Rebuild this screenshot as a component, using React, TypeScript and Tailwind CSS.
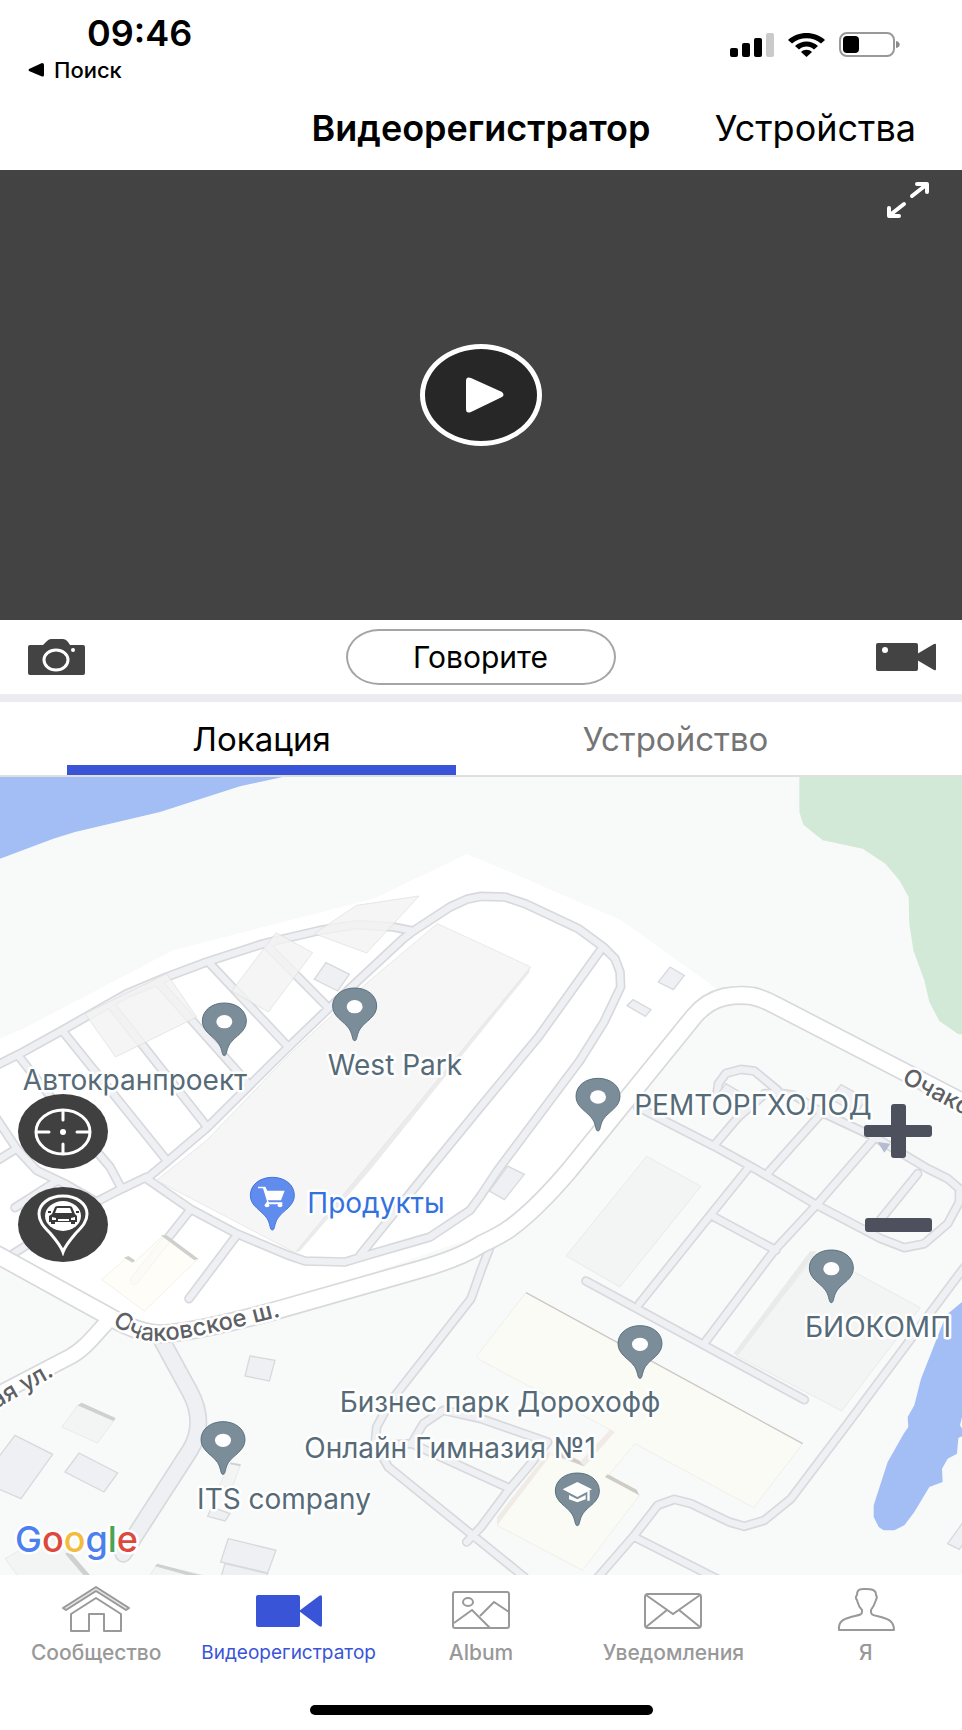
import React, { useState } from 'react';

type Point = { x: number; y: number };
type MapTab = 'location' | 'device';

const LABEL = '#566b78';

/* Terrain is drawn on a 2886 x 2394 grid, labels on a 962 x 798 one */
const districtRoads = [
  'M-20 890 60 850 190 778 380 670 500 620 620 575 790 520 960 480 1070 463 1180 470 1240 482',
  'M440 1220 350 1263 270 1305 40 1450',
  'M440 1225 500 1175 620 1073 860 835 985 715 1070 635 1210 505 1240 482 1350 410 1400 387 1443 378 1515 380 1575 400 1735 475 1810 530 1845 565 1860 605 1862 650 1812 755 1740 870 1493 1200 1443 1275 1410 1320 1290 1400 1100 1455 1035 1475 915 1472 865 1455 710 1390 570 1315Z',
  'M1805 535 1615 800 1443 1008 1290 1195 1080 1455',
  'M58 860 160 990 330 1190 362 1250',
  'M190 785 500 1170',
  'M330 700 620 1068',
  'M478 640 745 940',
  'M630 580 865 830',
  'M800 525 985 712',
  'M-20 1030 50 1135 -20 1178M50 1135 110 1200 200 1243 290 1295M170 1232 45 1312',
  'M570 1320 403 1530',
  'M710 1395 567 1585',
];

const eastRoads = [
  'M1913 1010 2143 1128 2273 1200 2443 1300 2643 1405 2713 1432 2773 1420 2843 1360 2878 1295 2878 1255 2843 1225 2783 1195 2623 1100 2463 1025 2383 975 2333 967 2293 970',
  'M2150 975 2155 940 2178 909 2223 897 2263 902 2333 960',
  'M2293 972 2215 1040 2145 1122',
  'M2463 1030 2300 1212',
  'M2618 1110 2453 1300 2323 1440 2118 1712',
  'M2243 1195 2133 1332 1918 1600',
  'M2133 1335 2328 1440',
  'M1758 1532 2413 1888',
  'M2753 1210 2640 1350',
  'M2920 1460 2886 1500 2543 1960 2373 2185 2293 2250 2233 2268 2188 2255 2073 2200 2023 2187 1973 2205 1903 2295 1760 2460',
  'M1903 2300 2170 2435',
  'M1478 1410 1443 1500 1413 1585 1170 1895 1130 1970 1125 2020 1165 2090 1443 2315 1573 2420',
  'M1235 2020 1270 1960 1330 1920 1443 1945 1643 2015 1593 2080 1525 2160 1443 2270 1400 2315',
  'M1140 2025 1235 2020 1443 2115 1520 2150',
];

const sheds = [
  '978,577 1048,612 1013,662 943,627',
  '2010,590 2053,615 2020,658 1975,635',
  '1899,688 1953,718 1936,738 1881,706',
  '1523,1187 1573,1212 1513,1288 1468,1262',
  '45,1995 158,2052 63,2185 -30,2145 -10,2068',
  '237,2048 353,2108 312,2165 195,2105',
  '750,1757 825,1770 808,1832 735,1817',
  '685,2305 828,2340 803,2408 662,2375',
  '675,2380 803,2410 790,2440 660,2430',
  '635,2210 690,2230 675,2252 623,2238',
  '2886,2260 2843,2320 2878,2337 2910,2290',
  '2178,940 2220,965 2200,995 2150,975',
  '2523,943 2600,985 2570,1030 2490,985',
];

const blocks = [
  '1940,1158 2103,1248 1860,1550 1698,1457',
  '2450,1450 2553,1500 2761,1612 2525,1922 2208,1755',
  '233,1905 345,1947 292,2018 185,1970',
  '690,2080 722,2083 697,2150 657,2148',
  '145,2290 15,2365 70,2440 290,2440',
  '470,2383 610,2415 440,2430',
];

const pins: Point[] = [
  { x: 673, y: 857 },
  { x: 1064, y: 812 },
  { x: 1794, y: 1083 },
  { x: 669, y: 2113 },
  { x: 2494, y: 1598 },
  { x: 1920, y: 1825 },
];

const placeLabels = [
  { text: 'Автокранпроект', x: 135, y: 313 },
  { text: 'West Park', x: 395, y: 298 },
  { text: 'РЕМТОРГХОЛОД', x: 753, y: 338 },
  { text: 'Бизнес парк Дорохофф', x: 500, y: 635 },
  { text: 'Онлайн Гимназия №1', x: 450, y: 681 },
  { text: 'ITS company', x: 284, y: 732 },
];

const googleLetters = [
  { char: 'G', color: '#4c80ee' },
  { char: 'o', color: '#db4a3c' },
  { char: 'o', color: '#f3bc3a' },
  { char: 'g', color: '#4c80ee' },
  { char: 'l', color: '#4aa354' },
  { char: 'e', color: '#db4a3c' },
];

function Roads({ paths }: { paths: string[] }) {
  const d = paths.join('');
  return (
    <g fill="none" strokeLinecap="round" strokeLinejoin="round">
      <path d={d} stroke="#d8d9dd" strokeWidth="29" />
      <path d={d} stroke="#eff0f3" strokeWidth="19" />
    </g>
  );
}

function Pin({ x, y, fill = '#7b8d99', stroke = '#5b7280', children }: Point & {
  fill?: string;
  stroke?: string;
  children?: React.ReactNode;
}) {
  return (
    <g transform={`translate(${x} ${y})`}>
      <path
        d="M0-1C-8-1-5-18-16-36C-32-60-66-72-66-105C-66-137-37-159 0-159S66-137 66-105C66-72 32-60 16-36C5-18 8-1 0-1Z"
        fill={fill}
        stroke={stroke}
        strokeWidth="3"
      />
      {children ?? <ellipse cx="0" cy="-103" rx="24" ry="20" fill="#fff" />}
    </g>
  );
}

function Terrain() {
  const highway =
    'M-40 1436 0 1458 330 1640C400 1680 450 1694 500 1690C600 1680 720 1650 840 1617L1250 1500C1340 1475 1400 1450 1443 1422C1480 1405 1510 1390 1533 1372C1590 1330 1640 1280 1708 1200L2083 737C2110 705 2140 688 2173 680Q2215 672 2256 677Q2290 685 2323 703L2743 920 2920 1012';
  const street = 'M330 1645C280 1700 250 1740 205 1762L-40 1890';
  const yard = 'M480 1700 570 1865C605 1930 600 1990 570 2040L370 2350';

  return (
    <svg x="0" y="0" width="962" height="798" viewBox="0 20 2886 2394">
      <rect x="0" y="20" width="2886" height="2394" fill="#f8faf9" />
      <path d="M0 20H848L720 48 480 125 225 185 160 205 0 265Z" fill="#a3bef5" />
      <path
        d="M2398 20V125L2410 163 2468 210 2588 235 2656 280 2698 330 2726 380 2728 460 2740 540 2773 630 2788 695 2818 752 2875 792H2886V20Z"
        fill="#d3e9d7"
      />
      <path
        d="M0 805 70 775 520 540 1120 385 1400 252 1443 268 1863 450 2003 550 2150 655 2043 740 1673 1200 1583 1300 1443 1395 840 1600 500 1680 350 1640 0 1440Z"
        fill="#fff"
      />
      <path
        d="M2886 1595 2838 1635 2763 1825 2743 1905 2723 1940 2725 1970 2711 1990 2663 2075 2621 2205V2240L2636 2270 2651 2280H2683L2713 2265 2743 2225 2788 2150 2828 2135 2826 2095 2843 2065 2871 2050 2875 2003 2886 1998V1975L2880 1965 2886 1940Z"
        fill="#a3bef5"
      />

      <g fill="none" strokeLinejoin="round">
        <path d={yard} stroke="#d8d9dd" strokeWidth="54" strokeLinecap="round" />
        <path d={yard} stroke="#eff0f3" strokeWidth="44" strokeLinecap="round" />
      </g>
      <Roads paths={eastRoads} />
      <Roads paths={districtRoads} />
      <g fill="none" strokeLinejoin="round">
        <path d={street} stroke="#d8d9dd" strokeWidth="52" />
        <path d={highway} stroke="#d8d9dd" strokeWidth="58" />
        <path d={street} stroke="#fff" strokeWidth="42" />
        <path d={highway} stroke="#fff" strokeWidth="48" />
      </g>

      <g fill="#eff0f3" stroke="#d8d9dd" strokeWidth="4">
        {sheds.map((points) => (
          <polygon key={points} points={points} />
        ))}
      </g>
      <g fill="#f3f4f4" stroke="#e3e4e4" strokeWidth="2">
        {blocks.map((points) => (
          <polygon key={points} points={points} />
        ))}
      </g>
      <g fill="#cfd0d0">
        <path d="M233 1905 245 1897 347 1943 340 1952Z" />
        <path d="M195 2350 210 2344 270 2414H250Z" />
        <path d="M138 2290 150 2284 158 2292 148 2298Z" />
        <path d="M465 2388 472 2380 600 2414H560Z" />
        <path d="M690 2076 722 2082 720 2088 692 2082Z" />
      </g>
      <path d="M2430 1443H2450L2215 1755 2200 1750Z" fill="#e9eaea" />

      {/* Warehouses of the northern block */}
      <polygon
        points="1312,460 1443,520 1592,590 1587,608 1443,785 1110,1200 900,1442 885,1447 470,1230 620,1110 860,860 1110,630"
        fill="#ebebeb"
      />
      <polygon
        points="1312,460 1443,520 1592,590 1443,770 1090,1200 885,1447 470,1230 620,1110 860,860 1110,630"
        fill="#f6f6f6"
        stroke="#e3e3e3"
        strokeWidth="2"
      />
      <g fill="#f2f2f2" fillOpacity="0.8" stroke="#dcdcdc" strokeWidth="2">
        <polygon points="1070,405 1257,377 1100,548 943,490" />
        <polygon points="828,487 938,547 805,725 695,662" />
        <polygon points="500,610 590,740 347,860 255,730" />
      </g>

      {/* Shops and the business park */}
      <polygon
        points="490,1395 593,1467 433,1622 305,1528 380,1462 405,1475"
        fill="#fefdf7"
        fillOpacity="0.85"
        stroke="#efeadf"
        strokeWidth="2"
      />
      <path d="M482 1395H500L595 1465 583 1470ZM372 1462 385 1457 405 1470 398 1477Z" fill="#cfcfcb" />
      <polygon
        points="1578,1567 2408,2020 2261,2212 1905,2020 1828,2112 1918,2175 1748,2400 1491,2265 1648,2050 1753,2088 1843,1985 1443,1770 1430,1757 1443,1740"
        fill="#fbfbf5"
        stroke="#ece9e2"
        strokeWidth="2"
      />
      <path d="M1578 1567 2408 2020" stroke="#cdc8c4" strokeWidth="4" />
      <path d="M1815 2120 1823 2112 1910 2158 1918 2175Z" fill="#cfcbc5" />
      <path d="M1690 2045 1745 2075 1753 2088 1665 2055Z" fill="#d3cdc8" />
      <path d="M1843 1985 1753 2088 1740 2075 1830 1978ZM1648 2040V2060L1491 2265V2240Z" fill="#f1ebe6" />

      <path d="M2633 1115 2671 1120 2653 1147Z" fill="#b5bbd0" />

      {pins.map((pin) => (
        <Pin key={`${pin.x}-${pin.y}`} x={pin.x} y={pin.y} />
      ))}
      <Pin x={817} y={1380} fill="#608ced" stroke="#4374dc">
        <g fill="#fff" transform="translate(-817 -1380)">
          <path d="M774 1249H796L802 1261H854L843 1290H803L807 1296H847V1302H797L801 1293 789 1254H774Z" />
          <ellipse cx="801" cy="1305" rx="7" ry="6" />
          <ellipse cx="840" cy="1305" rx="7" ry="6" />
        </g>
      </Pin>
      <Pin x={1732} y={2267}>
        <g fill="#fff">
          <path d="M-44-110 0-132 44-110 0-87Z" />
          <path d="M-25-93 0-80 25-93V-80L0-71-25-80ZM30-106H37V-76H30Z" />
        </g>
      </Pin>
    </svg>
  );
}

function CityMap() {
  return (
    <svg viewBox="0 0 962 798" className="block w-full h-auto" role="img" aria-label="Карта">
      <defs>
        <path id="road-south" d="M112 546C124 556 138 565 160 564C200 561 250 547 310 532" />
        <path id="road-east" d="M901 305L1010 362" />
        <path id="road-west" d="M-4 632L80 584" />
      </defs>
      <Terrain />
      <g stroke="#fff" strokeWidth="5" strokeLinejoin="round" paintOrder="stroke">
        <g className="text-[28px]" fill={LABEL} textAnchor="middle">
          {placeLabels.map((label) => (
            <text key={label.text} x={label.x} y={label.y}>
              {label.text}
            </text>
          ))}
          <text x="376" y="436" fill="#3471e0">
            Продукты
          </text>
          <text x="805" y="560" textAnchor="start">
            БИОКОМП
          </text>
        </g>
        <g className="text-[24px] font-medium" fill="#5d6064">
          <text>
            <textPath href="#road-south">Очаковское ш.</textPath>
          </text>
          <text>
            <textPath href="#road-east">Очако</textPath>
          </text>
          <text>
            <textPath href="#road-west">ая ул.</textPath>
          </text>
        </g>
        <text x="15" y="775" className="text-[36px] font-medium">
          {googleLetters.map((letter, n) => (
            <tspan key={n} fill={letter.color}>
              {letter.char}
            </tspan>
          ))}
        </text>
      </g>
    </svg>
  );
}

function StatusIcons() {
  return (
    <div className="flex items-center gap-[14px]">
      <svg width="44" height="24" viewBox="0 0 44 24">
        <rect x="0" y="15" width="8" height="9" rx="2" />
        <rect x="12" y="10" width="8" height="14" rx="2" />
        <rect x="24" y="5" width="8" height="19" rx="2" />
        <rect x="36" y="0" width="8" height="24" rx="2" fill="#cacaca" />
      </svg>
      <svg width="37" height="24" viewBox="0 0 37 24">
        <path d="M0 7C10-2.300 27-2.300 37 7L33 10.500C25 3.500 12 3.500 4 10.500Z" />
        <path d="M7 13C13.500 7 23.500 7 30 13L26 16.500C22 12.500 15 12.500 11 16.500Z" />
        <path d="M13 19C16 16 21 16 24 19L18.500 24Z" />
      </svg>
      <svg width="62" height="26" viewBox="0 0 62 26">
        <rect x="1" y="1" width="54" height="23" rx="7" fill="none" stroke="#999" strokeWidth="2" />
        <rect x="4" y="4" width="16" height="17" rx="4" />
        <path d="M57 9C62 10 62 15 57 16Z" fill="#8a8a8a" />
      </svg>
    </div>
  );
}

function HouseIcon() {
  return (
    <svg width="68" height="48" viewBox="0 0 68 48" fill="none" stroke="#999" strokeWidth="2" strokeLinejoin="round">
      <path d="M34 2 1 23 4 25 34 6 64 25 67 23Z" fill="#e3e3e3" />
      <path d="M34 13 9 29V46H27V29H42V46H59V29Z" />
    </svg>
  );
}

function RecorderIcon() {
  return (
    <svg width="66" height="48" viewBox="0 0 66 48" fill="#3a54d8">
      <rect x="0" y="10" width="44" height="32" rx="2" />
      <path d="M43 26 63 11Q66 9 66 12V40Q66 43 63 41Z" />
    </svg>
  );
}

function AlbumIcon() {
  return (
    <svg width="58" height="48" viewBox="0 0 58 48" fill="none" stroke="#999" strokeWidth="2">
      <rect x="1" y="7" width="56" height="36" rx="2" />
      <ellipse cx="16" cy="17" rx="5" ry="4" />
      <path d="M2 38 20 25 38 43M28 31 42 17 57 27" />
    </svg>
  );
}

function MailIcon() {
  return (
    <svg width="58" height="48" viewBox="0 0 58 48" fill="none" stroke="#999" strokeWidth="2">
      <rect x="1" y="9" width="56" height="34" rx="3" />
      <path d="M2 10 29 29 56 10M2 42 23 25M56 42 35 25" />
    </svg>
  );
}

function PersonIcon() {
  return (
    <svg width="58" height="48" viewBox="0 0 58 48" fill="none" stroke="#999" strokeWidth="2" strokeLinejoin="round">
      <path d="M2 45C1 36 7 34 14 32C22 30 25 30 25 27V25C21 21 21 18 20 15C18 13 19 11 20 10C20 3 25 4 29 4S39 4 39 10C40 11 40 13 39 15C38 18 37 21 34 25V27C34 30 36 30 44 32C51 34 57 36 57 45Z" />
    </svg>
  );
}

const navItems = [
  { label: 'Сообщество', icon: <HouseIcon />, active: false },
  { label: 'Видеорегистратор', icon: <RecorderIcon />, active: true },
  { label: 'Album', icon: <AlbumIcon />, active: false },
  { label: 'Уведомления', icon: <MailIcon />, active: false },
  { label: 'Я', icon: <PersonIcon />, active: false },
];

export default function App() {
  const [tab, setTab] = useState<MapTab>('location');

  const tabs: { id: MapTab; label: string }[] = [
    { id: 'location', label: 'Локация' },
    { id: 'device', label: 'Устройство' },
  ];

  return (
    <div className="min-h-screen flex flex-col bg-white text-black font-['Inter','Liberation_Sans',sans-serif]">
      {/* Status bar */}
      <div className="flex justify-between pt-3 pr-[61px]">
        <div>
          <div className="pl-[87px] text-[36px] leading-[42px] font-semibold">09:46</div>
          <a href="#search" className="flex items-center gap-[10px] pl-7 text-[22px] leading-[32px] font-medium">
            <svg width="16" height="14" viewBox="0 0 16 14">
              <path d="M1 6 14 0Q16 0 16 2V12Q16 14 14 13.500L1 8Q0 7 1 6Z" />
            </svg>
            Поиск
          </a>
        </div>
        <div className="pt-5">
          <StatusIcons />
        </div>
      </div>

      <header className="grid grid-cols-[1fr_auto_1fr] items-center h-[84px]">
        <h1 className="col-start-2 text-[36px] leading-[42px] font-semibold">Видеорегистратор</h1>
        <a href="#devices" className="justify-self-end pr-[46px] text-[36px] leading-[42px]">
          Устройства
        </a>
      </header>

      {/* Video */}
      <section className="relative aspect-[962/450] bg-[#434343] flex items-center justify-center">
        <button
          type="button"
          aria-label="Воспроизвести"
          className="w-[122px] h-[102px] rounded-[50%] border-[5px] border-white bg-[#272727] flex items-center justify-center"
        >
          <svg width="38" height="36" viewBox="0 0 38 36" fill="#fff" className="ml-2">
            <path d="M0 4Q0-1 5 1L36 15Q39 18 36 20L5 35Q0 37 0 32Z" />
          </svg>
        </button>
        <button type="button" aria-label="На весь экран" className="absolute top-3 right-[33px]">
          <svg
            width="42"
            height="36"
            viewBox="0 0 42 36"
            fill="none"
            stroke="#fff"
            strokeWidth="4"
            strokeLinecap="round"
            strokeLinejoin="round"
          >
            <path d="M25 14 39 3M30 2H40V10M17 22 3 33M2 26V34H12" />
          </svg>
        </button>
      </section>

      {/* Camera controls */}
      <div className="flex items-center justify-between h-[82px] pl-7 pr-[26px] border-b-8 border-[#ebebf0]">
        <button type="button" aria-label="Сделать фото">
          <svg width="57" height="36" viewBox="0 0 57 36">
            <path
              d="M2 6H15L19 2Q21 0 23 0H35Q38 0 40 3L42 6H55Q57 6 57 8V34Q57 36 55 36H2Q0 36 0 34V8Q0 6 2 6Z"
              fill="#434343"
            />
            <ellipse cx="28" cy="21" rx="12" ry="10" fill="none" stroke="#fff" strokeWidth="3" />
            <ellipse cx="45" cy="11" rx="2" ry="2" fill="#fff" />
          </svg>
        </button>
        <button
          type="button"
          className="w-[270px] h-14 rounded-[33px/28px] border-2 border-[#a5a5a5] text-[30px] leading-[36px]"
        >
          Говорите
        </button>
        <button type="button" aria-label="Записать видео">
          <svg width="60" height="28" viewBox="0 0 60 28">
            <rect x="0" y="0" width="42" height="28" rx="2" fill="#434343" />
            <path d="M41 11 58 1Q60 0 60 2V26Q60 28 58 27L41 17Z" fill="#434343" />
            <ellipse cx="9" cy="7" rx="3" ry="3" fill="#fff" />
          </svg>
        </button>
      </div>

      {/* Tabs */}
      <div role="tablist" className="grid grid-cols-2 gap-[25px] h-[75px] pl-[67px] pr-[92px] border-b-2 border-[#dfdfdf]">
        {tabs.map((t) => (
          <button
            key={t.id}
            type="button"
            role="tab"
            aria-selected={tab === t.id}
            onClick={() => setTab(t.id)}
            className={`pt-[10px] text-[33px] leading-[40px] border-b-[10px] ${
              tab === t.id ? 'border-[#3a54d8] text-black' : 'border-transparent text-[#757575]'
            }`}
          >
            {t.label}
          </button>
        ))}
      </div>

      {/* Map */}
      <main className="relative">
        <CityMap />
        <div className="absolute left-[18px] top-[317px] flex flex-col gap-[18px]">
          <button
            type="button"
            aria-label="Моё местоположение"
            className="w-[90px] h-[75px] rounded-[50%] bg-[#3a3a3a]/97 flex items-center justify-center"
          >
            <svg width="58" height="48" viewBox="0 0 58 48" fill="none" stroke="#fff" strokeWidth="3" strokeLinecap="round">
              <ellipse cx="29" cy="24" rx="27" ry="22" />
              <path d="M29 3V12M29 36V45M3 24H15M43 24H55" />
              <ellipse cx="29" cy="24" rx="3" ry="3" fill="#fff" stroke="none" />
            </svg>
          </button>
          <button
            type="button"
            aria-label="Местоположение автомобиля"
            className="w-[90px] h-[75px] rounded-[50%] bg-[#3a3a3a]/97 flex items-center justify-center"
          >
            <svg width="54" height="62" viewBox="0 0 54 62">
              <path
                d="M27 58C25 52 20 46 14 39C7 32 3 27 3 20C3 10 13 2 27 2S51 10 51 20C51 27 47 32 40 39C34 46 29 52 27 58Z"
                fill="none"
                stroke="#fff"
                strokeWidth="3"
              />
              <ellipse cx="27" cy="22" rx="18" ry="15" fill="#fff" />
              <g fill="#3a3a3a" transform="translate(1 0)">
                <path
                  d="M15 20 18 13Q19 12 21 12H32Q34 12 35 13L38 20 40 22V28H38V30H34V28H18V30H14V28H12V22ZM18 19H35L33 14H20Z"
                  fillRule="evenodd"
                />
                <path d="M11 17H14V19H11ZM39 17H42V19H39Z" />
              </g>
              <path d="M16 23 20 24V26H16ZM39 23 35 24V26H39ZM22 25H33V27H22Z" fill="#fff" />
            </svg>
          </button>
        </div>
        <div className="absolute right-[30px] top-[327px] flex flex-col gap-10">
          <button type="button" aria-label="Приблизить">
            <svg width="68" height="54" viewBox="0 0 68 54" fill="#4c515d" className="block">
              <rect x="0" y="21" width="68" height="12" rx="3" />
              <rect x="27" y="0" width="15" height="54" rx="3" />
            </svg>
          </button>
          <button type="button" aria-label="Отдалить">
            <svg width="68" height="54" viewBox="0 0 68 54" fill="#4c515d" className="block">
              <rect x="1" y="20" width="67" height="14" rx="3" />
            </svg>
          </button>
        </div>
      </main>

      {/* Bottom navigation */}
      <nav className="grid grid-cols-5 pt-[10px]">
        {navItems.map((item) => (
          <a
            key={item.label}
            href="#nav"
            aria-current={item.active ? 'page' : undefined}
            className={`flex flex-col items-center gap-2 leading-[24px] whitespace-nowrap ${
              item.active ? 'text-[19px] text-[#3a54d8]' : 'text-[21px] text-[#999] font-medium'
            }`}
          >
            {item.icon}
            {item.label}
          </a>
        ))}
      </nav>
      <div className="mt-auto pb-[15px] flex justify-center">
        <div className="w-[343px] h-[10px] rounded-full bg-black" />
      </div>
    </div>
  );
}
